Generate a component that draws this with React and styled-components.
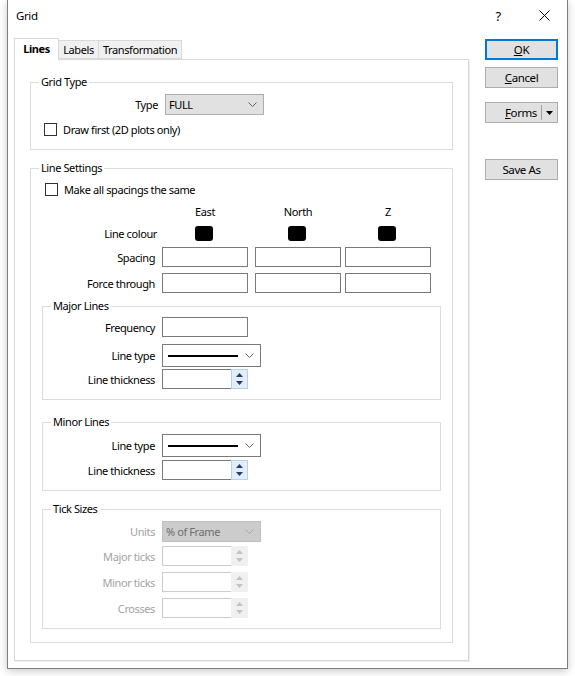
import React from "react";
import styled, { createGlobalStyle } from "styled-components";

const GlobalStyle = createGlobalStyle`
  html, body {
    margin: 0;
    padding: 0;
    background: #fff;
  }
  body {
    font-family: "Noto Sans", "Segoe UI", Arial, sans-serif;
    font-size: 11px;
    letter-spacing: -0.4px;
    color: #000;
  }
  * {
    box-sizing: border-box;
  }
`;

const Screen = styled.div`
  width: 575px;
  height: 676px;
  padding-left: 7px;
  overflow: hidden;
  background: #fff;
`;

const Window = styled.div`
  width: 561px;
  height: 669px;
  background: #fff;
  border: 1px solid #7f7f7f;
  border-top: none;
  box-shadow: 0 2px 8px rgba(0, 0, 0, 0.22);
  display: flex;
  flex-direction: column;
`;

const TitleBar = styled.div`
  height: 31px;
  display: flex;
  align-items: center;
  padding-left: 8px;
`;

const Title = styled.div`
  flex: 1;
  font-size: 11.5px;
`;

const CaptionButton = styled.div`
  width: 46px;
  height: 31px;
  display: flex;
  align-items: center;
  justify-content: center;
  font-size: 13px;
`;

const Body = styled.div`
  flex: 1;
  display: flex;
  padding: 7px 0 0 6px;
`;

const TabArea = styled.div`
  width: 455px;
  display: flex;
  flex-direction: column;
`;

const TabStrip = styled.div`
  height: 21px;
  display: flex;
  align-items: flex-end;
`;

const Tab = styled.div`
  width: ${(p) => p.$w}px;
  height: ${(p) => (p.$active ? 22 : 19)}px;
  margin-bottom: ${(p) => (p.$active ? -1 : 0)}px;
  margin-left: ${(p) => (p.$first ? 0 : -1)}px;
  border: 1px solid #d9d9d9;
  border-bottom: ${(p) => (p.$active ? "none" : "1px solid #d9d9d9")};
  background: ${(p) => (p.$active ? "#fff" : "#f0f0f0")};
  font-weight: ${(p) => (p.$active ? 700 : 400)};
  display: flex;
  align-items: center;
  justify-content: center;
  padding-bottom: ${(p) => (p.$active ? 2 : 0)}px;
  position: relative;
  z-index: ${(p) => (p.$active ? 2 : 1)};
`;

const TabPanel = styled.div`
  border: 1px solid #d9d9d9;
  box-shadow: 1px 1px 0 #ececec;
  padding: 14px 15px 17px;
`;

const Group = styled.fieldset`
  margin: ${(p) => p.$mt || 0}px ${(p) => p.$mx || 0}px 0;
  padding: ${(p) => p.$pt || 0}px 0 ${(p) => p.$pb || 0}px;
  border: 1px solid #dcdcdc;
  min-width: 0;

  legend {
    padding: 0 2px;
    margin-left: 8px;
    line-height: 16px;
    font-size: 11px;
  }
`;

const Row = styled.div`
  display: flex;
  align-items: center;
  height: ${(p) => p.$h}px;
  margin-top: ${(p) => p.$mt || 0}px;
`;

const Label = styled.div`
  width: ${(p) => p.$w}px;
  padding-right: ${(p) => p.$pr}px;
  text-align: right;
  white-space: nowrap;
  color: ${(p) => (p.$disabled ? "#a3a3a3" : "#000")};
`;

const Cell = styled.div`
  width: ${(p) => p.$w}px;
  display: flex;
  align-items: center;
`;

const ColHead = styled.div`
  width: 86px;
  text-align: center;
`;

const Swatch = styled.div`
  width: 18px;
  height: 15px;
  margin-left: 33px;
  background: #000;
  border-radius: 3px;
`;

const TextBox = styled.div`
  width: ${(p) => p.$w || 86}px;
  height: 20px;
  border: 1px solid #7a7a7a;
  background: #fff;
`;

const CheckRow = styled.label`
  display: flex;
  align-items: center;
  height: 16px;
  margin-top: ${(p) => p.$mt}px;
  padding-left: ${(p) => p.$pl}px;
  gap: 6px;
`;

const Box = styled.span`
  width: 13px;
  height: 13px;
  border: 1px solid #333;
  background: #fff;
`;

const Combo = styled.div`
  width: ${(p) => p.$w}px;
  height: ${(p) => p.$h}px;
  border: 1px solid ${(p) => (p.$disabled ? "#bfbfbf" : p.$flat ? "#adadad" : "#7a7a7a")};
  background: ${(p) => (p.$disabled ? "#cccccc" : p.$flat ? "#e1e1e1" : "#fff")};
  color: ${(p) => (p.$disabled ? "#6d6d6d" : "#000")};
  display: flex;
  align-items: center;
  padding: 0 6px 0 3px;
  gap: 4px;
`;

const ComboText = styled.div`
  flex: 1;
`;

const LineSample = styled.div`
  flex: 1;
  height: 2px;
  background: #000;
  margin: 0 3px 0 2px;
`;

const Spin = styled.div`
  width: 86px;
  height: 20px;
  display: flex;
`;

const SpinInput = styled.div`
  flex: 1;
  border: 1px solid ${(p) => (p.$disabled ? "#cccccc" : "#7a7a7a")};
  border-right: none;
  background: #fff;
`;

const SpinButtons = styled.div`
  width: 17px;
  border: 1px solid ${(p) => (p.$disabled ? "#f0f0f0" : "#b7d0ec")};
  background: ${(p) => (p.$disabled ? "#f0f0f0" : "#e2edf9")};
  display: flex;
  flex-direction: column;
  align-items: center;
  justify-content: center;
  gap: 4px;
`;

const Side = styled.div`
  margin-left: 16px;
  width: 73px;
  display: flex;
  flex-direction: column;
`;

const Button = styled.div`
  height: 21px;
  margin-top: ${(p) => p.$mt}px;
  background: #e1e1e1;
  border: ${(p) => (p.$default ? "2px solid #0078d7" : "1px solid #adadad")};
  display: flex;
  align-items: center;
  justify-content: center;
  font-size: 11.5px;
`;

const SplitButton = styled(Button)`
  justify-content: flex-start;
  padding-left: 19px;
`;

const SplitSep = styled.div`
  width: 1px;
  height: 15px;
  margin-left: auto;
  background: #a0a0a0;
`;

const SplitArrow = styled.div`
  width: 15px;
  display: flex;
  justify-content: center;
`;

const Chevron = ({ color = "#606060" }) => (
  <svg width="9" height="5" viewBox="0 0 9 5">
    <polyline points="0.5,0.5 4.5,4.5 8.5,0.5" fill="none" stroke={color} strokeWidth="1" />
  </svg>
);

const Triangle = ({ up, color }) => (
  <svg width="7" height="4" viewBox="0 0 7 4">
    <polygon points={up ? "0,4 3.5,0 7,4" : "0,0 3.5,4 7,0"} fill={color} />
  </svg>
);

const CloseIcon = () => (
  <svg width="11" height="11" viewBox="0 0 11 11">
    <path d="M0.5 0.5 L10.5 10.5 M10.5 0.5 L0.5 10.5" stroke="#000" strokeWidth="1" />
  </svg>
);

const SpinBox = ({ disabled }) => {
  const c = disabled ? "#c2c2c2" : "#1c3f70";
  return (
    <Spin>
      <SpinInput $disabled={disabled} />
      <SpinButtons $disabled={disabled}>
        <Triangle up color={c} />
        <Triangle color={c} />
      </SpinButtons>
    </Spin>
  );
};

const LineCombo = () => (
  <Combo $w={99} $h={23}>
    <LineSample />
    <Chevron />
  </Combo>
);

const App = () => {
  return (
    <Screen>
      <GlobalStyle />
      <Window>
        <TitleBar>
          <Title>Grid</Title>
          <CaptionButton>?</CaptionButton>
          <CaptionButton>
            <CloseIcon />
          </CaptionButton>
        </TitleBar>
        <Body>
          <TabArea>
            <TabStrip>
              <Tab $first $active $w={45}>Lines</Tab>
              <Tab $w={41}>Labels</Tab>
              <Tab $w={84}>Transformation</Tab>
            </TabStrip>
            <TabPanel>
              <Group $pt={4} $pb={12}>
                <legend>Grid Type</legend>
                <Row $h={21}>
                  <Label $w={134} $pr={7}>Type</Label>
                  <Combo $w={99} $h={21} $flat>
                    <ComboText>FULL</ComboText>
                    <Chevron />
                  </Combo>
                </Row>
                <CheckRow $mt={6} $pl={13}>
                  <Box />
                  Draw first (2D plots only)
                </CheckRow>
              </Group>

              <Group $mt={10} $pt={0} $pb={13}>
                <legend>Line Settings</legend>
                <CheckRow $mt={5} $pl={14}>
                  <Box />
                  Make all spacings the same
                </CheckRow>
                <Row $h={16} $mt={6}>
                  <Label $w={131} $pr={6} />
                  <Cell $w={93}><ColHead>East</ColHead></Cell>
                  <Cell $w={90}><ColHead>North</ColHead></Cell>
                  <Cell $w={86}><ColHead>Z</ColHead></Cell>
                </Row>
                <Row $h={15} $mt={7}>
                  <Label $w={131} $pr={5}>Line colour</Label>
                  <Cell $w={93}><Swatch /></Cell>
                  <Cell $w={90}><Swatch /></Cell>
                  <Cell $w={86}><Swatch /></Cell>
                </Row>
                <Row $h={20} $mt={6}>
                  <Label $w={131} $pr={7}>Spacing</Label>
                  <Cell $w={93}><TextBox /></Cell>
                  <Cell $w={90}><TextBox /></Cell>
                  <Cell $w={86}><TextBox /></Cell>
                </Row>
                <Row $h={20} $mt={6}>
                  <Label $w={131} $pr={7}>Force through</Label>
                  <Cell $w={93}><TextBox /></Cell>
                  <Cell $w={90}><TextBox /></Cell>
                  <Cell $w={86}><TextBox /></Cell>
                </Row>

                <Group $mt={5} $mx={11} $pt={3} $pb={10}>
                  <legend>Major Lines</legend>
                  <Row $h={20}>
                    <Label $w={119} $pr={7}>Frequency</Label>
                    <TextBox />
                  </Row>
                  <Row $h={23} $mt={7}>
                    <Label $w={119} $pr={7}>Line type</Label>
                    <LineCombo />
                  </Row>
                  <Row $h={20} $mt={2}>
                    <Label $w={119} $pr={7}>Line thickness</Label>
                    <SpinBox />
                  </Row>
                </Group>

                <Group $mt={14} $mx={11} $pt={4} $pb={10}>
                  <legend>Minor Lines</legend>
                  <Row $h={23}>
                    <Label $w={119} $pr={7}>Line type</Label>
                    <LineCombo />
                  </Row>
                  <Row $h={20} $mt={3}>
                    <Label $w={119} $pr={7}>Line thickness</Label>
                    <SpinBox />
                  </Row>
                </Group>

                <Group $mt={10} $mx={11} $pt={4} $pb={10}>
                  <legend>Tick Sizes</legend>
                  <Row $h={21}>
                    <Label $w={119} $pr={7} $disabled>Units</Label>
                    <Combo $w={99} $h={21} $disabled>
                      <ComboText>% of Frame</ComboText>
                      <Chevron color="#a8a8a8" />
                    </Combo>
                  </Row>
                  <Row $h={20} $mt={4}>
                    <Label $w={119} $pr={7} $disabled>Major ticks</Label>
                    <SpinBox disabled />
                  </Row>
                  <Row $h={20} $mt={6}>
                    <Label $w={119} $pr={7} $disabled>Minor ticks</Label>
                    <SpinBox disabled />
                  </Row>
                  <Row $h={20} $mt={6}>
                    <Label $w={119} $pr={7} $disabled>Crosses</Label>
                    <SpinBox disabled />
                  </Row>
                </Group>
              </Group>
            </TabPanel>
          </TabArea>

          <Side>
            <Button $default $mt={1}><u>O</u>K</Button>
            <Button $mt={7}><u>C</u>ancel</Button>
            <SplitButton $mt={14}>
              <span><u>F</u>orms</span>
              <SplitSep />
              <SplitArrow>
                <Triangle color="#000" />
              </SplitArrow>
            </SplitButton>
            <Button $mt={36}>Save As</Button>
          </Side>
        </Body>
      </Window>
    </Screen>
  );
};

export default App;
